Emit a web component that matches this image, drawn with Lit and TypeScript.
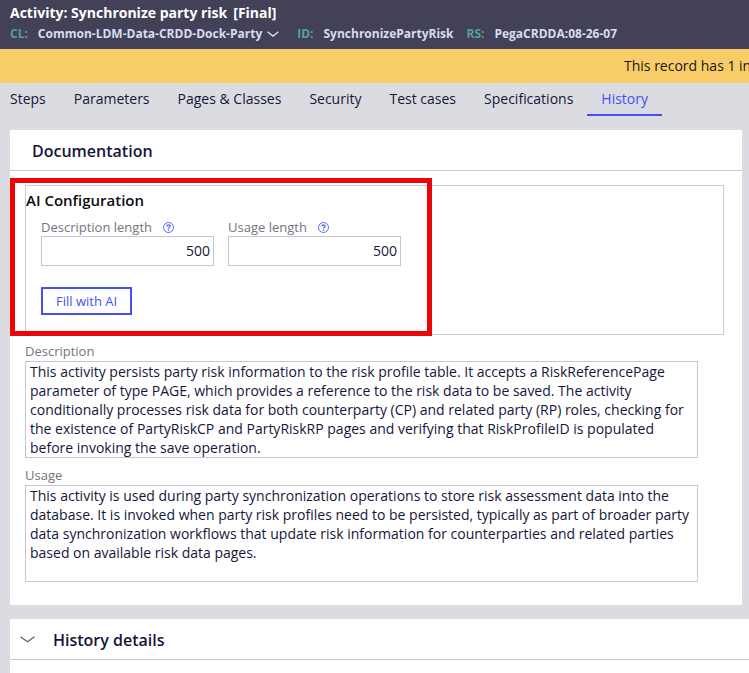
import { LitElement, html, css } from "lit";
import { customElement, property, state } from "lit/decorators.js";
import { classMap } from "lit/directives/class-map.js";

const TABS = [
  "Steps",
  "Parameters",
  "Pages & Classes",
  "Security",
  "Test cases",
  "Specifications",
  "History",
];

const DESCRIPTION =
  "This activity persists party risk information to the risk profile table. It accepts a RiskReferencePage parameter of type PAGE, which provides a reference to the risk data to be saved. The activity conditionally processes risk data for both counterparty (CP) and related party (RP) roles, checking for the existence of PartyRiskCP and PartyRiskRP pages and verifying that RiskProfileID is populated before invoking the save operation.";

const USAGE =
  "This activity is used during party synchronization operations to store risk assessment data into the database. It is invoked when party risk profiles need to be persisted, typically as part of broader party data synchronization workflows that update risk information for counterparties and related parties based on available risk data pages.";

@customElement("length-field")
class LengthField extends LitElement {
  @property() label = "";
  @property() value = "";

  static styles = css`
    :host {
      display: block;
      width: 173px;
    }
    .caption {
      display: flex;
      align-items: center;
      gap: 11px;
      height: 18px;
      font-size: 13px;
      line-height: 18px;
      color: #75757d;
    }
    .help {
      display: block;
      width: 11px;
      height: 18px;
      padding: 1px 0 0;
      border: 0;
      background: none;
      color: #4c5af0;
    }
    .help svg {
      display: block;
      width: 11px;
      height: 11px;
      overflow: visible;
    }
    .box {
      display: block;
      box-sizing: border-box;
      width: 100%;
      height: 30px;
      padding: 0 3px 2px;
      border: 1px solid #c6c7cb;
      border-radius: 0;
      background: #fff;
      color: #15163a;
      font: inherit;
      text-align: right;
    }
  `;

  render() {
    return html`
      <div class="caption">
        <label for="box">${this.label}</label>
        <button class="help" type="button" aria-label="Help">
          <svg viewBox="0 0 11 11" fill="none" stroke="currentColor">
            <circle cx="5.5" cy="5.5" r="5" stroke-width="0.9" />
            <path d="M3.9 4.4C3.9 2.4 7.2 2.4 7.2 4.3C7.2 5.4 5.5 5.3 5.5 6.6" stroke-width="1.2" />
            <path d="M5.5 7.5V8.7" stroke-width="1.3" />
          </svg>
        </button>
      </div>
      <input id="box" class="box" type="text" inputmode="numeric" .value=${this.value} />
    `;
  }
}

@customElement("app-root")
class AppRoot extends LitElement {
  @state() private active = "History";

  static styles = css`
    :host {
      display: block;
      min-height: 100vh;
      overflow: hidden;
      background: #dbdce1;
      color: #15163a;
      font-family: "Open Sans", "Noto Sans", sans-serif;
      font-size: 14px;
      line-height: 19px;
    }
    h1,
    h2,
    h3,
    p,
    dl,
    dd {
      margin: 0;
    }
    button {
      font: inherit;
      cursor: pointer;
    }
    .header {
      box-sizing: border-box;
      height: 49px;
      padding: 3px 10px 0;
      background: #424157;
      color: #fff;
    }
    .title {
      display: flex;
      gap: 6px;
      font-size: 14px;
      font-weight: 700;
      line-height: 20px;
      white-space: nowrap;
    }
    .meta {
      display: flex;
      gap: 13px;
      font-size: 12px;
      font-weight: 700;
      line-height: 21px;
      white-space: nowrap;
    }
    .pair {
      display: flex;
      gap: 10px;
    }
    .key {
      color: #57a09b;
    }
    .val {
      display: flex;
      align-items: center;
      gap: 5px;
      color: #d9dcf0;
    }
    .class-menu {
      display: flex;
      padding: 0 5px 0 0;
      border: 0;
      background: none;
      color: #d9dcf0;
    }
    .class-menu svg {
      width: 12px;
      height: 6px;
    }
    .banner {
      display: flex;
      justify-content: flex-end;
      height: 34px;
      background: #f8cd67;
      color: #17171c;
      line-height: 34px;
    }
    .notice {
      width: 125px;
      overflow: hidden;
      white-space: nowrap;
    }
    .tabs {
      display: flex;
      height: 33px;
      padding-left: 10px;
      margin-bottom: 14px;
    }
    .tab {
      box-sizing: border-box;
      padding: 0 14px;
      border: 0;
      border-bottom: 2px solid transparent;
      background: none;
      color: #15163a;
      line-height: 31px;
      white-space: nowrap;
    }
    .tab:first-child {
      padding-left: 0;
    }
    .tab.on {
      border-bottom-color: #454ff5;
      color: #454ff5;
    }
    .card {
      background: #fff;
      margin-left: 10px;
    }
    .doc {
      position: relative;
      margin-right: 7px;
      margin-bottom: 14px;
      padding-bottom: 15px;
    }
    .head {
      display: flex;
      align-items: center;
      box-sizing: border-box;
      height: 41px;
      border-bottom: 1px solid #cacbd2;
    }
    .doc .head {
      padding: 1px 22px 0;
    }
    .history .head {
      padding: 1px 10px 0;
      gap: 18px;
    }
    .heading {
      font-size: 16px;
      font-weight: 600;
      line-height: 22px;
    }
    .toggle {
      display: flex;
      padding: 0;
      border: 0;
      background: none;
      color: #60606f;
    }
    .toggle svg {
      width: 15px;
      height: 7px;
    }
    .history {
      min-height: 60px;
    }
    .ai {
      box-sizing: border-box;
      height: 150px;
      margin: 14px 18px 7px 15px;
      padding: 5px 0 0;
      border: 1px solid #cacacd;
    }
    .sub {
      color: #0c0c14;
      font-size: 15px;
      font-weight: 600;
      line-height: 19px;
    }
    .fields {
      display: flex;
      gap: 14px;
      margin: 8px 15px 21px;
    }
    .fill {
      height: 28px;
      margin-left: 15px;
      padding: 0 13px;
      border: 2px solid #454ff5;
      background: #fff;
      color: #454ff5;
      font-size: 13px;
      line-height: 24px;
    }
    .callout {
      position: absolute;
      top: 48px;
      left: 0;
      box-sizing: border-box;
      width: 422px;
      height: 158px;
      border: 5px solid #eb0505;
      pointer-events: none;
    }
    .entry {
      margin: 0 44px 8px 15px;
    }
    .label {
      display: block;
      height: 19px;
      color: #75757d;
      font-size: 13px;
      line-height: 19px;
    }
    .area {
      display: block;
      box-sizing: border-box;
      width: 100%;
      height: 97px;
      padding: 0 4px;
      border: 1px solid #c6c7cb;
      border-radius: 0;
      background: #fff;
      color: #15163a;
      font: inherit;
      resize: none;
      overflow: hidden;
    }
  `;

  private tab(name: string) {
    const on = name === this.active;
    return html`<button
      type="button"
      role="tab"
      aria-selected=${on}
      class=${classMap({ tab: true, on })}
      @click=${() => (this.active = name)}
    >${name}</button>`;
  }

  render() {
    return html`
      <header class="header">
        <h1 class="title"><span>Activity: Synchronize party risk</span><span>[Final]</span></h1>
        <dl class="meta">
          <div class="pair">
            <dt class="key">CL:</dt>
            <dd class="val">
              Common-LDM-Data-CRDD-Dock-Party
              <button class="class-menu" type="button" aria-label="Class options">
                <svg viewBox="0 0 12 6" fill="none" stroke="currentColor" stroke-width="1.4">
                  <path d="M0.5 0.7L6 5L11.5 0.7" />
                </svg>
              </button>
            </dd>
          </div>
          <div class="pair">
            <dt class="key">ID:</dt>
            <dd class="val">SynchronizePartyRisk</dd>
          </div>
          <div class="pair">
            <dt class="key">RS:</dt>
            <dd class="val">PegaCRDDA:08-26-07</dd>
          </div>
        </dl>
      </header>
      <div class="banner"><p class="notice">This record has 1 in</p></div>
      <nav class="tabs" role="tablist">${TABS.map((t) => this.tab(t))}</nav>
      <main>
        <section class="card doc">
          <div class="head"><h2 class="heading">Documentation</h2></div>
          <div class="ai">
            <h3 class="sub">AI Configuration</h3>
            <div class="fields">
              <length-field label="Description length" value="500"></length-field>
              <length-field label="Usage length" value="500"></length-field>
            </div>
            <button class="fill" type="button">Fill with AI</button>
          </div>
          <div class="entry">
            <label class="label" for="description">Description</label>
            <textarea class="area" id="description" spellcheck="false" .value=${DESCRIPTION}></textarea>
          </div>
          <div class="entry">
            <label class="label" for="usage">Usage</label>
            <textarea class="area" id="usage" spellcheck="false" .value=${USAGE}></textarea>
          </div>
          <div class="callout"></div>
        </section>
        <section class="card history">
          <div class="head">
            <button class="toggle" type="button" aria-label="Toggle history details">
              <svg viewBox="0 0 15 7" fill="none" stroke="currentColor" stroke-width="1.3">
                <path d="M0.5 0.8L7.5 5.8L14.5 0.8" />
              </svg>
            </button>
            <h2 class="heading">History details</h2>
          </div>
        </section>
      </main>
    `;
  }
}
